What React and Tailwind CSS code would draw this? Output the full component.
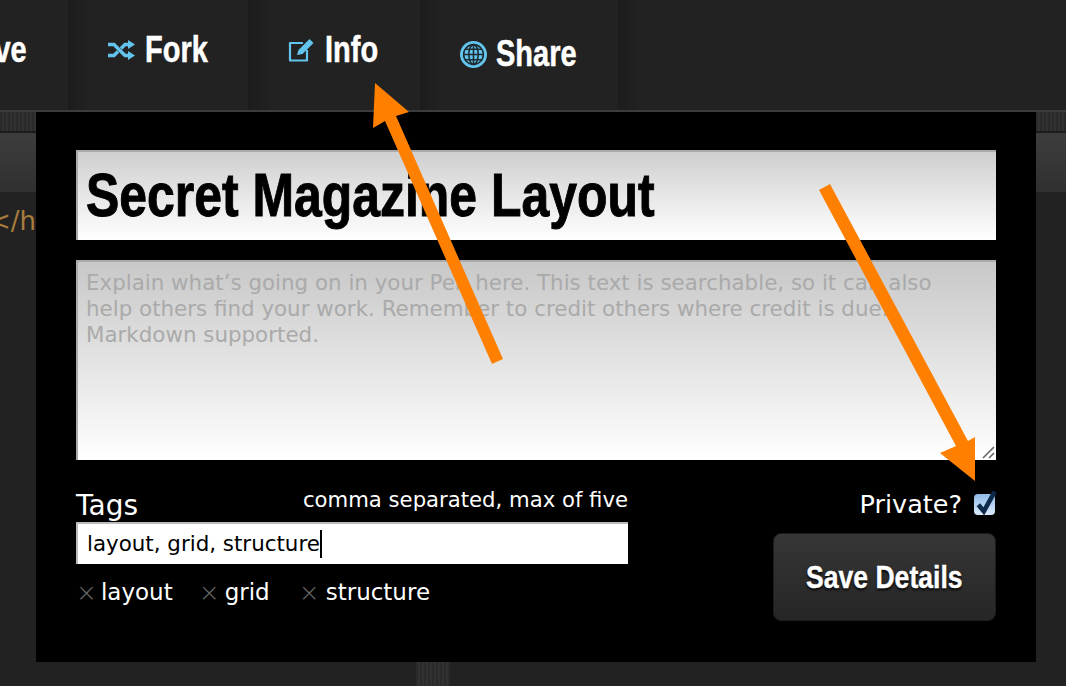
import React from "react";

const NARROW = "font-['Liberation_Sans',sans-serif] font-bold";
const BODY = "font-['DejaVu_Sans',sans-serif]";
const TEXTURE = "bg-[repeating-linear-gradient(90deg,#2a2a2a_0_2px,#323232_2px_4px)]";

function Globe() {
  return (
    <svg viewBox="0 0 26 26" className="h-[27px] w-[27px]">
      <circle cx="13" cy="13" r="13" fill="#63c5ee" />
      <g fill="none" stroke="#1d2a30" strokeWidth="1.5">
        <circle cx="13" cy="13" r="9.5" />
        <ellipse cx="13" cy="13" rx="4.5" ry="9.5" />
        <path d="M13 3.5v19M3.5 13h19M5 8h16M5 18h16" />
      </g>
    </svg>
  );
}

function ForkIcon() {
  return (
    <svg viewBox="0 0 27 20" className="h-[20px] w-[27px]" fill="#63c5ee">
      <path d="M0 4.5h6l11 11h4M0 15.5h6l4-4M13 8.5l4-4h4" fill="none" stroke="#63c5ee" strokeWidth="3.4" />
      <path d="M20 0l7 4.5-7 4.5zM20 11l7 4.5-7 4.5z" />
    </svg>
  );
}

function InfoIcon() {
  return (
    <svg viewBox="0 0 27 24" className="h-[24px] w-[27px]">
      <path d="M15 5H2v17.5h17V12" fill="none" stroke="#63c5ee" strokeWidth="2.2" strokeLinejoin="round" />
      <path d="M9 17l1.5-5L21.5 1l4 4L14.500 16z" fill="#63c5ee" />
    </svg>
  );
}

// No hay fuente condensada instalada: se comprime la Liberation Sans a lo ancho.
function Condensed({ width, className = "", children }) {
  return (
    <span className={`block shrink-0 ${className}`} style={{ width }}>
      <span className={`${NARROW} block origin-left scale-x-[0.805] whitespace-nowrap`}>{children}</span>
    </span>
  );
}

function NavItem({ icon, label, width, className = "" }) {
  return (
    <div
      className={`flex h-full items-center gap-[10px] bg-gradient-to-r from-[#1c1c1c] to-[#222222] to-[24px] px-10 ${className}`}
    >
      {icon}
      <Condensed width={width} className="text-[36px] leading-none text-white [-webkit-text-stroke:0.5px_#fff]">
        {label}
      </Condensed>
    </div>
  );
}

function Tag({ label, className = "" }) {
  return (
    <span className={`flex items-center gap-[4px] ${className}`}>
      <span className="text-[25px] leading-none font-light text-[#666]">×</span>
      {label}
    </span>
  );
}

export default function App() {
  return (
    <div className="relative h-[686px] w-[1066px] overflow-hidden bg-[#222222]">
      {/* barra superior */}
      <header className="flex h-[112px] border-b-2 border-[#3c3c3c] bg-[#222222]">
        <div className="-ml-[41px] flex items-center pr-10 pb-[10px]">
          <Condensed width={69} className="text-[36px] leading-none text-white [-webkit-text-stroke:0.5px_#fff]">
            Save
          </Condensed>
        </div>
        <NavItem label="Fork" width={63} className="pb-[10px]" icon={<ForkIcon />} />
        <NavItem label="Info" width={55} className="pb-[10px]" icon={<InfoIcon />} />
        <NavItem label="Share" width={82} className="pb-[2px] !gap-[9px]" icon={<Globe />} />
        <div className="w-6 bg-gradient-to-r from-[#1c1c1c] to-[#222222]" />
      </header>

      {/* editor detrás del modal */}
      <div className={`h-[19px] ${TEXTURE}`} />
      <div className="h-[2px] bg-[#1c1c1c]" />
      <div className="h-[59px] bg-gradient-to-b from-[#3d3d3d] to-[#303030]" />
      <div className={`${BODY} pt-[16px] text-[26px] leading-none text-[#a87c3c]`}>
        <span className="-ml-[11px] block">&lt;/h</span>
      </div>

      {/* modal */}
      <div className="absolute top-[112px] left-[36px] h-[550px] w-[1000px] bg-black px-10 pt-[38px]">
        <div className="flex h-[90px] items-center border-t-2 border-l-2 border-[#aaa] bg-gradient-to-b from-[#cfcfcf] to-white pb-[2px] pl-[8px] text-[62px] leading-none text-black [-webkit-text-stroke:1px_#000]">
          <Condensed width={568}>Secret Magazine Layout</Condensed>
        </div>
        <div className="relative mt-5 h-[200px]">
          <textarea
            readOnly
            className={`${BODY} block h-full w-full resize-none border-t-2 border-l-2 border-[#aaa] bg-gradient-to-b from-[#c8c8c8] to-white px-[8px] pt-[8px] text-[21.4px] leading-[26px] outline-none placeholder:text-[#aaa]`}
            placeholder={"Explain what’s going on in your Pen here. This text is searchable, so it can also\nhelp others find your work. Remember to credit others where credit is due.\nMarkdown supported."}
          />
          <svg viewBox="0 0 16 16" className="absolute right-0 bottom-0 h-4 w-4">
            <path d="M3 14L14 3M9 14l5-5" fill="none" stroke="#666" strokeWidth="1.6" />
          </svg>
        </div>
        <div className="mt-[26px] flex justify-between">
          <div className="w-[552px]">
            <div className={`${BODY} flex items-end justify-between text-white`}>
              <span className="pt-[4px] text-[28px] leading-[32px]">Tags</span>
              <span className="pb-[8px] text-[21.2px] leading-[28px]">comma separated, max of five</span>
            </div>
            <div className={`${BODY} flex h-[42px] items-center border-t-2 border-l-2 border-[#bbb] bg-white pl-[9px] text-[21.4px] text-black`}>
              <span className="border-r-2 border-black leading-[28px]">layout, grid, structure</span>
            </div>
            <div className={`${BODY} mt-[14px] flex gap-[26px] text-[23px] leading-[28px] text-white`}>
              <Tag label="layout" />
              <Tag label="grid" className="mr-[3px] gap-[5px]" />
              <Tag label="structure" className="gap-[6px]" />
            </div>
          </div>
          <div className="flex w-[223px] flex-col items-end">
            <div className={`${BODY} flex h-[36px] items-center gap-[12px] pr-[1px] text-[25.5px] text-white`}>
              Private?
              <span className="relative h-[21px] w-[21px] rounded-[4px] bg-gradient-to-b from-[#8fb8e6] to-[#dcecff]">
                <svg viewBox="0 0 22 24" className="absolute -top-[6px] left-0 h-[27px] w-[24px]">
                  <path d="M4 15l5 6L19 3" fill="none" stroke="#0e2a4a" strokeWidth="4.2" />
                </svg>
              </span>
            </div>
            <button className={`${NARROW} mt-[11px] h-[88px] w-[223px] rounded-[8px] border border-[#1c1c1c] bg-gradient-to-b from-[#363636] to-[#262626] text-[32px] text-white [-webkit-text-stroke:0.4px_#fff] [text-shadow:0_2px_3px_#000]`}>
              <span className="inline-block scale-x-[0.83]">Save Details</span>
            </button>
          </div>
        </div>
      </div>

      {/* flechas de anotación */}
      <svg className="pointer-events-none absolute inset-0" width="1066" height="686">
        <g fill="#ff8000">
          <polygon points="375,83 409,112 396,116 503,359 492,364 385,121 373,128" />
          <polygon points="975,481 940,453 956,446 819,190 830,184 968,441 975,437" />
        </g>
      </svg>
      <div className={`absolute top-[662px] left-[416px] h-[24px] w-[34px] ${TEXTURE}`} />
    </div>
  );
}
